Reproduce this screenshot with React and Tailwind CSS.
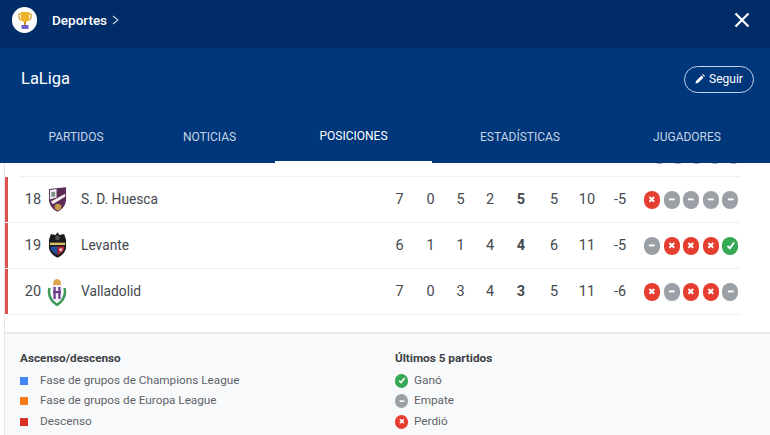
const rows = [
  { pos: 18, name: "S. D. Huesca", crest: "huesca", stats: [7, 0, 5, 2, 5, 5, 10, -5], form: "LDDDD" },
  { pos: 19, name: "Levante", crest: "levante", stats: [6, 1, 1, 4, 4, 6, 11, -5], form: "DLLLW" },
  { pos: 20, name: "Valladolid", crest: "valladolid", stats: [7, 0, 3, 4, 3, 5, 11, -6], form: "LDLLD" },
];

const tabs = [
  { label: "PARTIDOS", className: "w-[152px]" },
  { label: "NOTICIAS", className: "w-[123px] pr-[8px]" },
  { label: "POSICIONES", className: "w-[157px] border-b-[2px] border-white text-white" },
  { label: "ESTADÍSTICAS", className: "w-[176px]" },
  { label: "JUGADORES", className: "w-[162px] pr-[4px]" },
];

const statCols = [
  "w-[31px]",
  "w-[31px]",
  "w-[29px]",
  "w-[30px]",
  "w-[32px] font-bold",
  "w-[34px]",
  "w-[32px]",
  "w-[34px]",
];

const FormIcon = ({ result, size = "h-[18px] w-[16px]" }) => {
  const color =
    result === "W" ? "bg-[#34a853]" : result === "L" ? "bg-[#e53e30]" : "bg-[#9aa0a6]";
  return (
    <span className={`flex items-center justify-center rounded-full ${size} ${color}`}>
      <svg className="h-[60%] w-[60%]" viewBox="0 0 10 10" fill="none" stroke="white" strokeWidth="2">
        {result === "W" && <path d="M1.5 5.5 L4 8 L8.5 2" />}
        {result === "L" && <path d="M2.5 2.5 L7.5 7.5 M7.5 2.5 L2.5 7.5" />}
        {result === "D" && <path d="M2 5 L8 5" />}
      </svg>
    </span>
  );
};

const Crest = ({ type }) => {
  if (type === "huesca") {
    return (
      <svg width="19" height="27" viewBox="0 0 20 28">
        <path d="M1 3 L19 1 L19 15 Q18 23 10 27 Q2 23 1 15 Z" fill="#5b2a55" />
        <path d="M2 4 L9 3 L9 12 L2 14 Z" fill="#eeeeee" />
        <rect x="3.5" y="6" width="4" height="5" fill="#7f8f86" />
        <path d="M3 16 L18 8 L18 11 L5 19 Z" fill="#f4eef2" />
        <circle cx="10.5" cy="22" r="3.5" fill="#c69a4c" />
      </svg>
    );
  }
  if (type === "levante") {
    return (
      <svg width="19" height="27" viewBox="0 0 20 28">
        <path d="M10 0 L12 3 L17 2 L19 8 L19 17 Q18 23 10 27 Q2 23 1 17 L1 8 L3 2 L8 3 Z" fill="#1c1a1e" />
        <path d="M2 11 L18 11 L18 13.5 L2 13.5 Z" fill="#d9c36a" />
        <path d="M3 15 L10 15 L10 24 Q5 22 3 18 Z" fill="#1f4f9c" />
        <path d="M10 15 L17 15 L17 18 Q15 22 10 24 Z" fill="#b3263a" />
        <circle cx="13.5" cy="18.5" r="1.8" fill="#e2b7c0" />
        <circle cx="10" cy="6" r="2.5" fill="#55504f" />
      </svg>
    );
  }
  return (
    <svg width="20" height="28" viewBox="0 0 20 28">
      <path d="M2.5 10 Q0 20 10 27 Q20 20 17.5 10" fill="none" stroke="#3f9a58" strokeWidth="2.5" />
      <path d="M6 7 Q6 1 10 1 Q14 1 14 7 Z" fill="#e0a24a" />
      <path d="M5 7 L15 7 L15 19 Q14 23 10 24.5 Q6 23 5 19 Z" fill="#f4f1f6" />
      <rect x="6.5" y="9" width="2.2" height="12" fill="#6a3a8c" />
      <rect x="11.3" y="9" width="2.2" height="12" fill="#6a3a8c" />
      <rect x="6" y="13" width="8" height="2.2" fill="#6a3a8c" />
    </svg>
  );
};

const Row = ({ row }) => (
  <div className="flex h-[46px] items-stretch text-[#45494d]">
    <span className="mb-[1px] w-[3px] bg-[#d9544d]" />
    <div className="flex flex-1 items-center border-b border-[#eef0f2]">
      <span className="ml-[13px] w-[24px] text-center text-[14.5px]">{row.pos}</span>
      <span className="flex w-[24px] justify-center">
        <Crest type={row.crest} />
      </span>
      <span className="w-[315px] pl-[12px] text-[13.75px]">{row.name}</span>
      {row.stats.map((value, i) => (
        <span key={i} className={`text-center text-[14.5px] ${statCols[i]}`}>
          {value}
        </span>
      ))}
      <span className="ml-[7px] flex gap-[3.6px]">
        {row.form.split("").map((result, i) => (
          <FormIcon key={i} result={result} />
        ))}
      </span>
    </div>
  </div>
);

const Legend = ({ title, children, className }) => (
  <div className={className}>
    <h3 className="mb-[4px] text-[11.75px] font-bold text-[#3c4043]">{title}</h3>
    <ul className="flex flex-col gap-[2.5px]">{children}</ul>
  </div>
);

const LegendItem = ({ marker, label, gap }) => (
  <li className={`flex h-[18px] items-center text-[11.75px] text-[#5f6368] ${gap}`}>
    {marker}
    {label}
  </li>
);

const Square = ({ color }) => <span className={`h-[8px] w-[8px] ${color}`} />;

const App = () => {
  return (
    <div className="h-[435px] w-[770px] overflow-hidden bg-white font-['Roboto',sans-serif]">
      <header className="flex h-[48px] items-center bg-[#002d68] pb-[8px] pl-[12px] pr-[20px] text-white">
        <span className="flex h-[26px] w-[25px] items-center justify-center rounded-full bg-white">
          <svg width="14" height="19" viewBox="0 0 14 19">
            <path d="M1 3 H13 V6 Q13 9 10 9 H4 Q1 9 1 6 Z" fill="none" stroke="#e0b040" strokeWidth="1.5" />
            <path d="M3 1 H11 V7 Q11 11 7 11 Q3 11 3 7 Z" fill="#f0b429" />
            <rect x="6" y="11" width="2" height="3" fill="#c98f20" />
            <rect x="3.5" y="14" width="7" height="4" fill="#6b63c9" />
          </svg>
        </span>
        <span className="ml-[15px] text-[13.5px] font-medium">Deportes</span>
        <svg className="ml-[5px]" width="7" height="10" viewBox="0 0 7 10" fill="none" stroke="#c6d2e4" strokeWidth="1.1">
          <path d="M1 1 L6 5 L1 9" />
        </svg>
        <svg className="ml-auto" width="16" height="16" viewBox="0 0 16 16" fill="none" stroke="white" strokeWidth="2.2">
          <path d="M1.5 1.5 L14.5 14.5 M14.5 1.5 L1.5 14.5" />
        </svg>
      </header>

      <section className="h-[115px] bg-[#00367a]">
        <div className="flex h-[64px] items-center justify-between pb-[2px] pl-[21px] pr-[16px]">
          <h1 className="text-[16.5px] text-white">LaLiga</h1>
          <button className="flex h-[27px] w-[70px] items-center justify-center gap-[4px] rounded-full border-[1.5px] border-[#c5d3e6] text-[12px] text-white">
            <svg width="10" height="10" viewBox="0 0 10 10" fill="white">
              <path d="M0.5 9.5 L1 7 L6.5 1.5 L8.5 3.5 L3 9 Z M7.2 0.8 L8 0 L10 2 L9.2 2.8 Z" />
            </svg>
            Seguir
          </button>
        </div>
        <nav className="flex h-[51px]">
          {tabs.map((tab) => (
            <div
              key={tab.label}
              className={`flex items-center justify-center pb-[2px] text-[12px] text-[#c5d3e6] ${tab.className}`}
            >
              {tab.label}
            </div>
          ))}
        </nav>
      </section>

      <main className="ml-[4px] border-l border-[#e3e5e8]">
        <div className="mr-[29px]">
          <div className="ml-[15px] h-[14px] overflow-hidden border-b border-[#eef0f2]">
            <div className="ml-[632px] flex -translate-y-[17px] gap-[3.6px]">
              {"DDDDD".split("").map((result, i) => (
                <FormIcon key={i} result={result} />
              ))}
            </div>
          </div>
          {rows.map((row) => (
            <Row key={row.pos} row={row} />
          ))}
        </div>

        <footer className="mt-[17px] flex h-[110px] border-t-2 border-[#e8eaed] bg-[#f8f9fa] pl-[15px] pt-[16px]">
          <Legend title="Ascenso/descenso" className="w-[375px]">
            <LegendItem gap="gap-[12px]" marker={<Square color="bg-[#4285f4]" />} label="Fase de grupos de Champions League" />
            <LegendItem gap="gap-[12px]" marker={<Square color="bg-[#fa7b17]" />} label="Fase de grupos de Europa League" />
            <LegendItem gap="gap-[12px]" marker={<Square color="bg-[#d93025]" />} label="Descenso" />
          </Legend>
          <Legend title="Últimos 5 partidos">
            <LegendItem gap="gap-[6px]" marker={<FormIcon result="W" size="h-[14px] w-[13px]" />} label="Ganó" />
            <LegendItem gap="gap-[6px]" marker={<FormIcon result="D" size="h-[14px] w-[13px]" />} label="Empate" />
            <LegendItem gap="gap-[6px]" marker={<FormIcon result="L" size="h-[14px] w-[13px]" />} label="Perdió" />
          </Legend>
        </footer>
      </main>
    </div>
  );
};

export default App;
